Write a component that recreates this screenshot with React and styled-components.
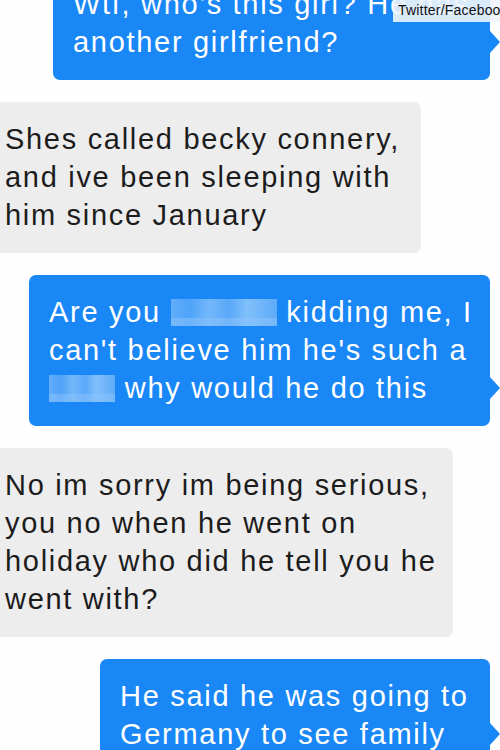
import React from "react";
import styled, { createGlobalStyle, css } from "styled-components";

const BLUE = "#1a87f6";
const GREY = "#ededee";

const GlobalStyle = createGlobalStyle`
  html, body {
    margin: 0;
    padding: 0;
    background: #ffffff;
    overflow: hidden;
  }
  body {
    font-family: "Liberation Sans", Arial, Helvetica, sans-serif;
  }
`;

const Screen = styled.div`
  position: relative;
  width: 500px;
  height: 750px;
  overflow: hidden;
  background: #fefefe;
`;

const Thread = styled.div`
  display: flex;
  flex-direction: column;
  gap: 22px;
  margin-top: -33px;
`;

const Bubble = styled.div`
  position: relative;
  box-sizing: border-box;
  width: ${(p) => p.$width}px;
  padding: 18px 20px 19px;
  border-radius: 7px;
  font-size: 29px;
  line-height: 38px;
  letter-spacing: 1.7px;

  ${(p) =>
    p.$mine
      ? css`
          align-self: flex-end;
          margin-right: 10px;
          background: ${BLUE};
          color: #ffffff;
          &::after {
            content: "";
            position: absolute;
            right: -10px;
            bottom: 27px;
            border-left: 10px solid ${BLUE};
            border-top: 11px solid transparent;
            border-bottom: 11px solid transparent;
          }
        `
      : css`
          align-self: flex-start;
          margin-left: -14px;
          padding-left: 19px;
          background: ${GREY};
          color: #1c1c1c;
        `}
`;

const Line = styled.span`
  display: block;
  white-space: nowrap;
`;

const Censor = styled.span`
  display: inline-block;
  width: ${(p) => p.$width}px;
  height: 27px;
  vertical-align: -4px;
  background:
    linear-gradient(180deg, transparent 70%, rgba(140, 195, 252, 0.5) 70%),
    linear-gradient(
      90deg,
      #62adfa 0%,
      #4fa3f9 18%,
      #74b8fb 36%,
      #5aa8f9 55%,
      #80c0fb 72%,
      #5eabf9 100%
    );
`;

const Watermark = styled.div`
  position: absolute;
  top: 0;
  left: 393px;
  padding: 3px 5px 4px;
  background: rgba(238, 245, 252, 0.9);
  color: #111111;
  font-size: 14px;
  line-height: 15px;
  letter-spacing: 0.2px;
  white-space: nowrap;
`;

export default function App() {
  return (
    <Screen>
      <GlobalStyle />
      <Thread>
        <Bubble $mine $width={437}>
          <Line>Wtf, who's this girl? He has</Line>
          <Line>another girlfriend?</Line>
        </Bubble>
        <Bubble $width={435}>
          <Line>Shes called becky connery,</Line>
          <Line>and ive been sleeping with</Line>
          <Line>him since January</Line>
        </Bubble>
        <Bubble $mine $width={461}>
          <Line>
            Are you <Censor $width={106} /> kidding me, I
          </Line>
          <Line>can't believe him he's such a</Line>
          <Line>
            <Censor $width={66} /> why would he do this
          </Line>
        </Bubble>
        <Bubble $width={467}>
          <Line>No im sorry im being serious,</Line>
          <Line>you no when he went on</Line>
          <Line>holiday who did he tell you he</Line>
          <Line>went with?</Line>
        </Bubble>
        <Bubble $mine $width={390}>
          <Line>He said he was going to</Line>
          <Line>Germany to see family</Line>
        </Bubble>
      </Thread>
      <Watermark>Twitter/Facebook</Watermark>
    </Screen>
  );
}
